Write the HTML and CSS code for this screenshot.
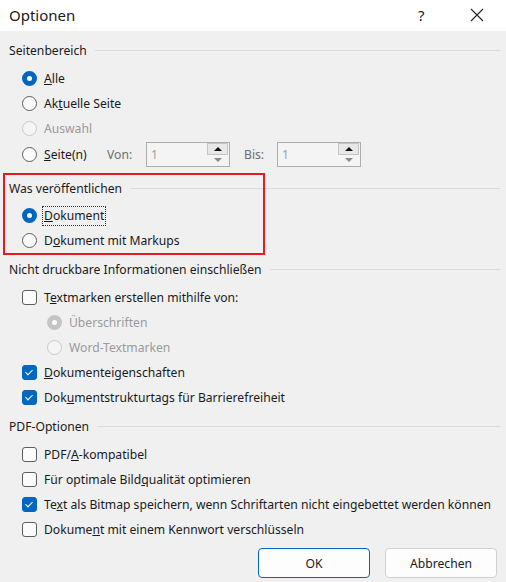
FILE: index.html
```html
<!DOCTYPE html>
<html lang="de">
<head>
    <meta charset="UTF-8">
    <title>Optionen</title>
    <link rel="stylesheet" href="styles.css">
</head>
<body>
    <div class="dialog">
        <div class="titlebar">
            <span class="title">Optionen</span>
            <span class="help">?</span>
            <svg class="close" width="14" height="14" viewBox="0 0 14 14"><path d="M1 1 L13 13 M13 1 L1 13" stroke="#222" stroke-width="1.1" fill="none"/></svg>
        </div>

        <div class="content">
            <!-- Seitenbereich -->
            <div class="group range">
                <div class="group-title"><span>Seitenbereich</span></div>
                <div class="row"><span class="radio checked"></span><span><u>A</u>lle</span></div>
                <div class="row"><span class="radio"></span><span>Ak<u>t</u>uelle Seite</span></div>
                <div class="row disabled"><span class="radio"></span><span>Auswahl</span></div>
                <div class="row range-row">
                    <span class="radio"></span>
                    <span class="range-label"><u>S</u>eite(n)</span>
                    <span class="range-text from">Von:</span>
                    <div class="spin">
                        <span class="spin-value">1</span>
                        <div class="spin-buttons">
                            <span class="spin-up"></span>
                            <span class="spin-down"></span>
                        </div>
                    </div>
                    <span class="range-text to">Bis:</span>
                    <div class="spin">
                        <span class="spin-value">1</span>
                        <div class="spin-buttons">
                            <span class="spin-up"></span>
                            <span class="spin-down"></span>
                        </div>
                    </div>
                </div>
            </div>

            <!-- Was veröffentlichen -->
            <div class="group publish">
                <div class="group-title"><span>Was veröffentlichen</span></div>
                <div class="row"><span class="radio checked"></span><span class="focus"><u>D</u>okument</span></div>
                <div class="row"><span class="radio"></span><span>D<u>o</u>kument mit Markups</span></div>
            </div>

            <!-- Nicht druckbare Informationen -->
            <div class="group info">
                <div class="group-title"><span>Nicht druckbare Informationen einschließen</span></div>
                <div class="row"><span class="check"></span><span>T<u>e</u>xtmarken erstellen mithilfe von:</span></div>
                <div class="row sub disabled"><span class="radio checked"></span><span>Überschriften</span></div>
                <div class="row sub disabled"><span class="radio"></span><span>Word-Textmarken</span></div>
                <div class="row"><span class="check checked"></span><span><u>D</u>okumenteigenschaften</span></div>
                <div class="row"><span class="check checked"></span><span>Dok<u>u</u>mentstrukturtags für Barrierefreiheit</span></div>
            </div>

            <!-- PDF-Optionen -->
            <div class="group pdf">
                <div class="group-title"><span>PDF-Optionen</span></div>
                <div class="row"><span class="check"></span><span>PDF/<u>A</u>-kompatibel</span></div>
                <div class="row"><span class="check"></span><span>Für optimale Bild<u>q</u>ualität optimieren</span></div>
                <div class="row"><span class="check checked"></span><span>Te<u>x</u>t als Bitmap speichern, wenn Schriftarten nicht eingebettet werden können</span></div>
                <div class="row"><span class="check"></span><span>Dokume<u>n</u>t mit einem Kennwort verschlüsseln</span></div>
            </div>

            <div class="buttons">
                <button class="btn default">OK</button>
                <button class="btn">Abbrechen</button>
            </div>
        </div>

        <div class="highlight"></div>
    </div>
</body>
</html>
```

FILE: styles.css
```css
body {
    margin: 0;
    padding: 0;
    font-family: "Noto Sans", "Open Sans", sans-serif;
    font-size: 12.15px;
    color: #1a1a1a;
    background: #f0f0f0;
}

.dialog {
    position: relative;
    width: 506px;
    height: 582px;
    background: #f0f0f0;
    overflow: hidden;
}

.titlebar {
    height: 31px;
    background: #ffffff;
    display: flex;
    align-items: center;
    padding-left: 9px;
}

.title {
    font-size: 15px;
    flex: 1;
    margin-top: -2px;
}

.help {
    font-size: 15px;
    width: 52px;
    margin-top: -2px;
}

.close {
    margin-right: 22px;
    margin-top: -2px;
}

.content {
    padding: 9px 6px 0 9px;
}

.group-title {
    height: 20px;
    display: flex;
    align-items: center;
}

.group-title::after {
    content: "";
    flex: 1;
    height: 1px;
    background: #dadada;
    margin-left: 8px;
}

/* spacing between the groups, tuned per group */
.range .group-title {
    margin-bottom: 6px;
}

.publish {
    margin-top: 11px;
}

.publish .group-title {
    margin-bottom: 5px;
}

.info {
    margin-top: 6px;
}

.info .group-title {
    margin-bottom: 6px;
}

.pdf {
    margin-top: 6px;
}

.pdf .group-title {
    margin-bottom: 6px;
}

.row {
    height: 25px;
    display: flex;
    align-items: center;
    padding-left: 13px;
}

.row.sub {
    padding-left: 38px;
}

.row.disabled {
    color: #9a9a9a;
}

.radio {
    width: 13px;
    height: 13px;
    border: 1px solid #5e5e5e;
    border-radius: 50%;
    background: #fbfbfb;
    margin-right: 7px;
    flex: none;
    box-sizing: content-box;
}

.radio.checked {
    width: 5px;
    height: 5px;
    border: 5px solid #0067c0;
    background: #ffffff;
}

.disabled .radio {
    border-color: #c9c9c9;
    background: #f5f5f5;
}

.disabled .radio.checked {
    border: 5px solid #c4c4c4;
    background: #ffffff;
}

.check {
    width: 13px;
    height: 13px;
    border: 1px solid #5e5e5e;
    border-radius: 3px;
    background: #fbfbfb;
    margin-right: 7px;
    flex: none;
    position: relative;
}

.check.checked {
    background: #0067c0;
    border-color: #0067c0;
}

.check.checked::after {
    content: "";
    position: absolute;
    left: 4px;
    top: 2px;
    width: 3px;
    height: 6px;
    border: solid #ffffff;
    border-width: 0 1px 1px 0;
    transform: rotate(45deg);
}

.focus {
    outline: 1px dotted #333;
    outline-offset: 1px;
    line-height: 16px;
}

.range-row {
    height: 26px;
}

.range-label {
    width: 63px;
}

.range-text {
    color: #6d6d6d;
}

.range-text.from {
    width: 39px;
}

.range-text.to {
    width: 33px;
    margin-left: 14px;
}

.spin {
    width: 84px;
    height: 25px;
    box-sizing: border-box;
    border: 1px solid #adadad;
    background: #f4f4f4;
    display: flex;
    align-items: center;
}

.spin-value {
    flex: 1;
    padding-left: 4px;
    color: #a0a0a0;
}

.spin-buttons {
    width: 21px;
    height: 23px;
    display: flex;
    flex-direction: column;
    margin-right: 1px;
}

.spin-up, .spin-down {
    flex: 1;
    display: flex;
    align-items: center;
    justify-content: center;
}

.spin-up {
    border: 1px solid #c4c4c4;
    background: #e8e8e8;
}

.spin-up::after {
    content: "";
    border: 4px solid transparent;
    border-bottom: 4px solid #111;
    border-top: 0;
}

.spin-down::after {
    content: "";
    border: 4px solid transparent;
    border-top: 4px solid #8a8a8a;
    border-bottom: 0;
}

.buttons {
    display: flex;
    justify-content: flex-end;
    gap: 15px;
    padding-right: 3px;
    margin-top: 6px;
}

.btn {
    width: 112px;
    height: 30px;
    font-family: "Noto Sans", "Open Sans", sans-serif;
    font-size: 12.15px;
    color: #1a1a1a;
    background: #fdfdfd;
    border: 1px solid #d0d0d0;
    border-radius: 4px;
}

.btn.default {
    border-color: #0067c0;
}

.highlight {
    position: absolute;
    left: 3px;
    top: 173px;
    width: 258px;
    height: 78px;
    border: 2px solid #e11b22;
}
```
